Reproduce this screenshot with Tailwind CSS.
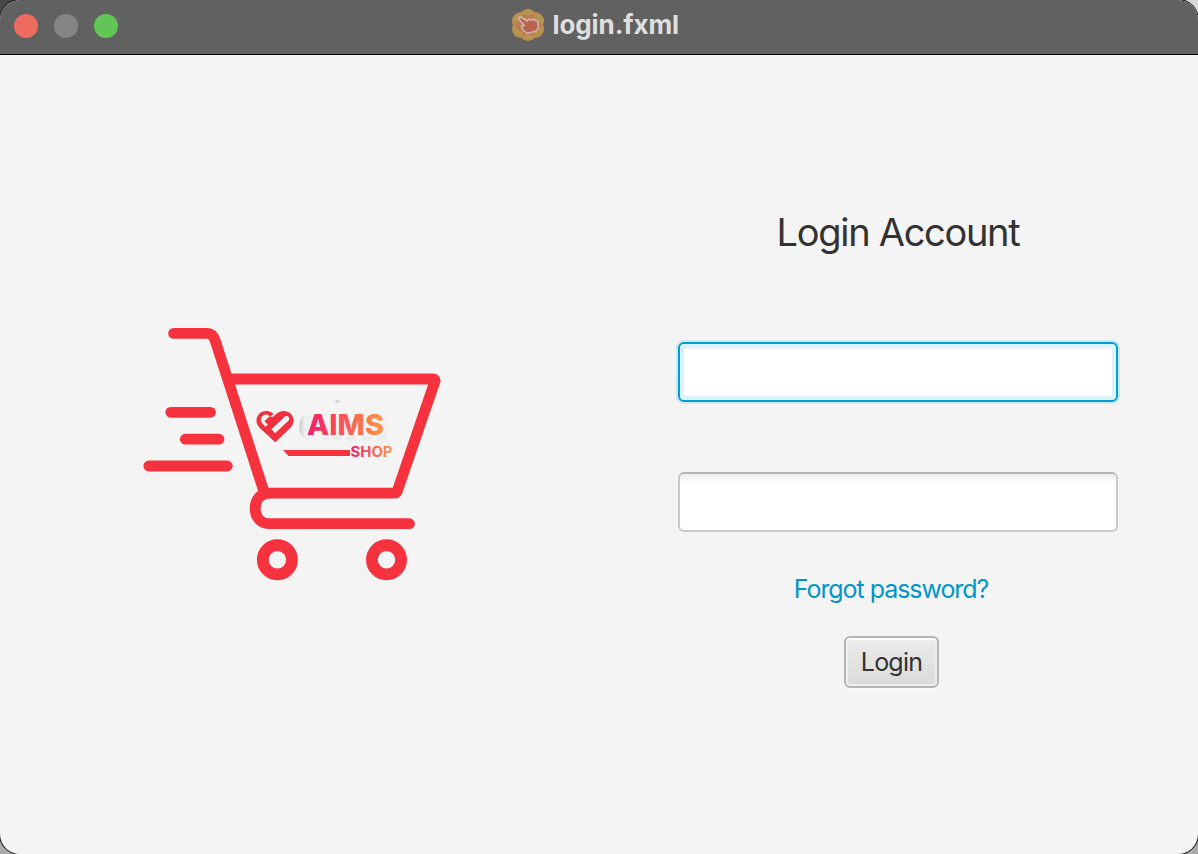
<!DOCTYPE html>
<html lang="en">
<head>
<meta charset="utf-8">
<title>login.fxml</title>
<script src="https://cdn.jsdelivr.net/npm/@tailwindcss/browser@4"></script>
</head>
<body class="h-[854px] w-[1198px] overflow-hidden bg-[linear-gradient(90deg,#484848_0_50%,#d8d8d8_50%)] font-['Inter',sans-serif]">
<div class="bg-[linear-gradient(transparent_50%,#aaa_50%)]">
<main class="flex h-[854px] w-[1198px] flex-col overflow-hidden rounded-[20px] bg-[#f4f4f4] shadow-[0_0_0_1px_#111]">
  <header class="relative flex h-[55px] shrink-0 items-center justify-center border-b border-black bg-[#616161]">
    <div class="absolute left-3.5 top-3.5 flex gap-4">
      <span class="size-6 rounded-full bg-[#ed6b5f]"></span>
      <span class="size-6 rounded-full bg-[#858585]"></span>
      <span class="size-6 rounded-full bg-[#62c655]"></span>
    </div>
    <div class="mb-[5px] mr-[7px] flex items-center gap-2">
      <svg class="size-[34px]" viewBox="0 0 34 34">
        <g fill="#b8924f"><circle cx="17" cy="9.500" r="8.500"/><circle cx="17" cy="24.500" r="8.500"/><circle cx="10" cy="13" r="9"/><circle cx="24" cy="13" r="9"/><circle cx="10" cy="21" r="9"/><circle cx="24" cy="21" r="9"/></g>
        <g fill="#bb7b4f"><circle cx="17" cy="17" r="10"/><path d="M3 17l6-6v12zM31 17l-6-6v12zM10 5l7 3 7-3-3 6h-8zM10 29l7-3 7 3-3-6h-8z"/></g>
        <path d="M7.500 10Q8.500 8.500 10.500 9.500l6 3.500 1.500-2 2.500 1 2-1 2 1.500 2 .5 1 7-2.500 3-9 2.500-4.500-4-1-3.500 3-.5-5-5.500z" fill="#b96350" stroke="#ceb6ac" stroke-width="1.600" stroke-linejoin="round"/>
      </svg>
      <h1 class="w-[128px] whitespace-nowrap text-[26px] font-bold leading-[32px] tracking-[-0.1px] text-[#dfdfdf]">login.fxml</h1>
    </div>
  </header>
  <div class="flex flex-1">
    <section class="w-[598px] pl-[130px] pt-[260px]">
      <svg class="h-[280px] w-[330px]" viewBox="130 315 330 280" fill="none">
        <defs>
          <linearGradient id="aims" gradientUnits="userSpaceOnUse" x1="307" y1="0" x2="384" y2="0"><stop stop-color="#f21c68"/><stop offset="1" stop-color="#fb9845"/></linearGradient>
          <linearGradient id="shop" gradientUnits="userSpaceOnUse" x1="351" y1="0" x2="393" y2="0"><stop stop-color="#f21c68"/><stop offset="1" stop-color="#fb9845"/></linearGradient>
          <linearGradient id="shade" x1="0" x2="1"><stop stop-color="#c8c8c8"/><stop offset=".25" stop-color="#efefef"/><stop offset="1" stop-color="#f1f1f1"/></linearGradient>
        </defs>
        <g stroke="#f6323e" stroke-width="10.8" stroke-linecap="round" stroke-linejoin="round">
          <path d="M173.6 333.4H207.5C212 333.4 214 336.5 215.500 341.500L264.500 493.200H394.500Q396.500 493.200 397.500 490.500L435.200 380.500Q435.200 379 433 379H229"/>
          <path d="M269 493.200C250.500 493.200 250.500 523.700 269 523.700H409.500"/>
          <path d="M170.700 412.300H210.500M185.300 439.200H219M148.800 466H227.300"/>
        </g>
        <g stroke="#f6323e" stroke-width="11.700"><circle cx="277.400" cy="559.700" r="14.600"/><circle cx="386.500" cy="559.700" r="14.600"/></g>
        <path d="M334 402.500Q337.300 397.500 340.500 402.500z" fill="#cfcfcf"/>
        <path d="M304 415C297 421 298 436 306 440C312 443 318 440 321 437V415z" fill="url(#shade)"/>
        <path d="M324 436H329V440H324zM333 436H342V440.500H333zM346 436H356V440.500H346zM362 436H372V440.500H362zM378 436H387V440.500H378z" fill="#ececec"/>
        <path d="M384 419H387V436H384z" fill="#f0f0f0"/>
        <path d="M275.200 442.300L259.300 427.500C255.500 423.500 255.500 417.500 259.300 413.800C263.500 410 270 410 275 415.300C280 410 286.500 410 290.700 413.800C294.500 417.500 294.500 423.500 290.700 427.500z" fill="#f0303f"/>
        <path d="M286.500 418.700L273.300 431.200" stroke="#f4f4f4" stroke-width="5.400"/>
        <path d="M286.500 418.700v0" stroke="#f4f4f4" stroke-width="5.400" stroke-linecap="round"/>
        <path d="M269.200 415.800C266 413.600 263 414.700 261.700 417C260.200 419.500 261.300 422.500 263 424.300L265.500 426.800L267.800 424.500L264.300 421.300L269.600 416.200L272.300 417.200L275 415.300L273.500 413.800L270.500 416.600z" fill="#f4f4f4"/>
        <path d="M283 450H350V456H288.500z" fill="#f6323e"/>
        <text x="307" y="435" textLength="77" lengthAdjust="spacingAndGlyphs" class="font-['Inter',sans-serif] text-[29px] font-extrabold" fill="url(#aims)">AIMS</text>
        <text x="350.500" y="457" textLength="42" lengthAdjust="spacingAndGlyphs" class="font-['Inter',sans-serif] text-[14px] font-bold" fill="url(#shop)">SHOP</text>
      </svg>
    </section>
    <section class="flex w-[600px] flex-col items-center">
      <h2 class="mt-[152px] h-[50px] whitespace-nowrap text-[38px] leading-[50px] tracking-[-1.300px] text-[#323232]">Login Account</h2>
      <input type="text" aria-label="Username" class="mt-[85px] h-[60px] w-[440px] rounded-md border-2 border-[#039ed3] bg-white px-4 text-[26px] shadow-[0_0_0_2px_#cde7ee,inset_0_0_0_4px_#ddf1f9,inset_0_6px_2px_-1px_#f2f2f2] outline-none">
      <input type="password" aria-label="Password" class="mt-[70px] h-[60px] w-[440px] rounded-md border-2 border-[#c8c8c8] border-t-[#b5b5b5] bg-[linear-gradient(#ebebeb,#fff_9px)] px-4 text-[26px] outline-none">
      <a href="#" class="mr-[14px] mt-[40px] h-[34px] whitespace-nowrap text-[25px] leading-[34px] tracking-[-1.050px] text-[#0096c9]">Forgot password?</a>
      <button class="mr-[13px] mt-[30px] h-[52px] w-[95px] rounded-md border-2 border-[#b5b5b5] bg-[linear-gradient(#ececec,#dadada)] pt-px text-[25px] tracking-[-0.8px] text-[#323232] shadow-[inset_0_2px_0_#fbfbfb,inset_0_0_0_2px_#eeeeee,0_2px_1px_#fafafa]">Login</button>
    </section>
  </div>
</main>
</div>
</body>
</html>
